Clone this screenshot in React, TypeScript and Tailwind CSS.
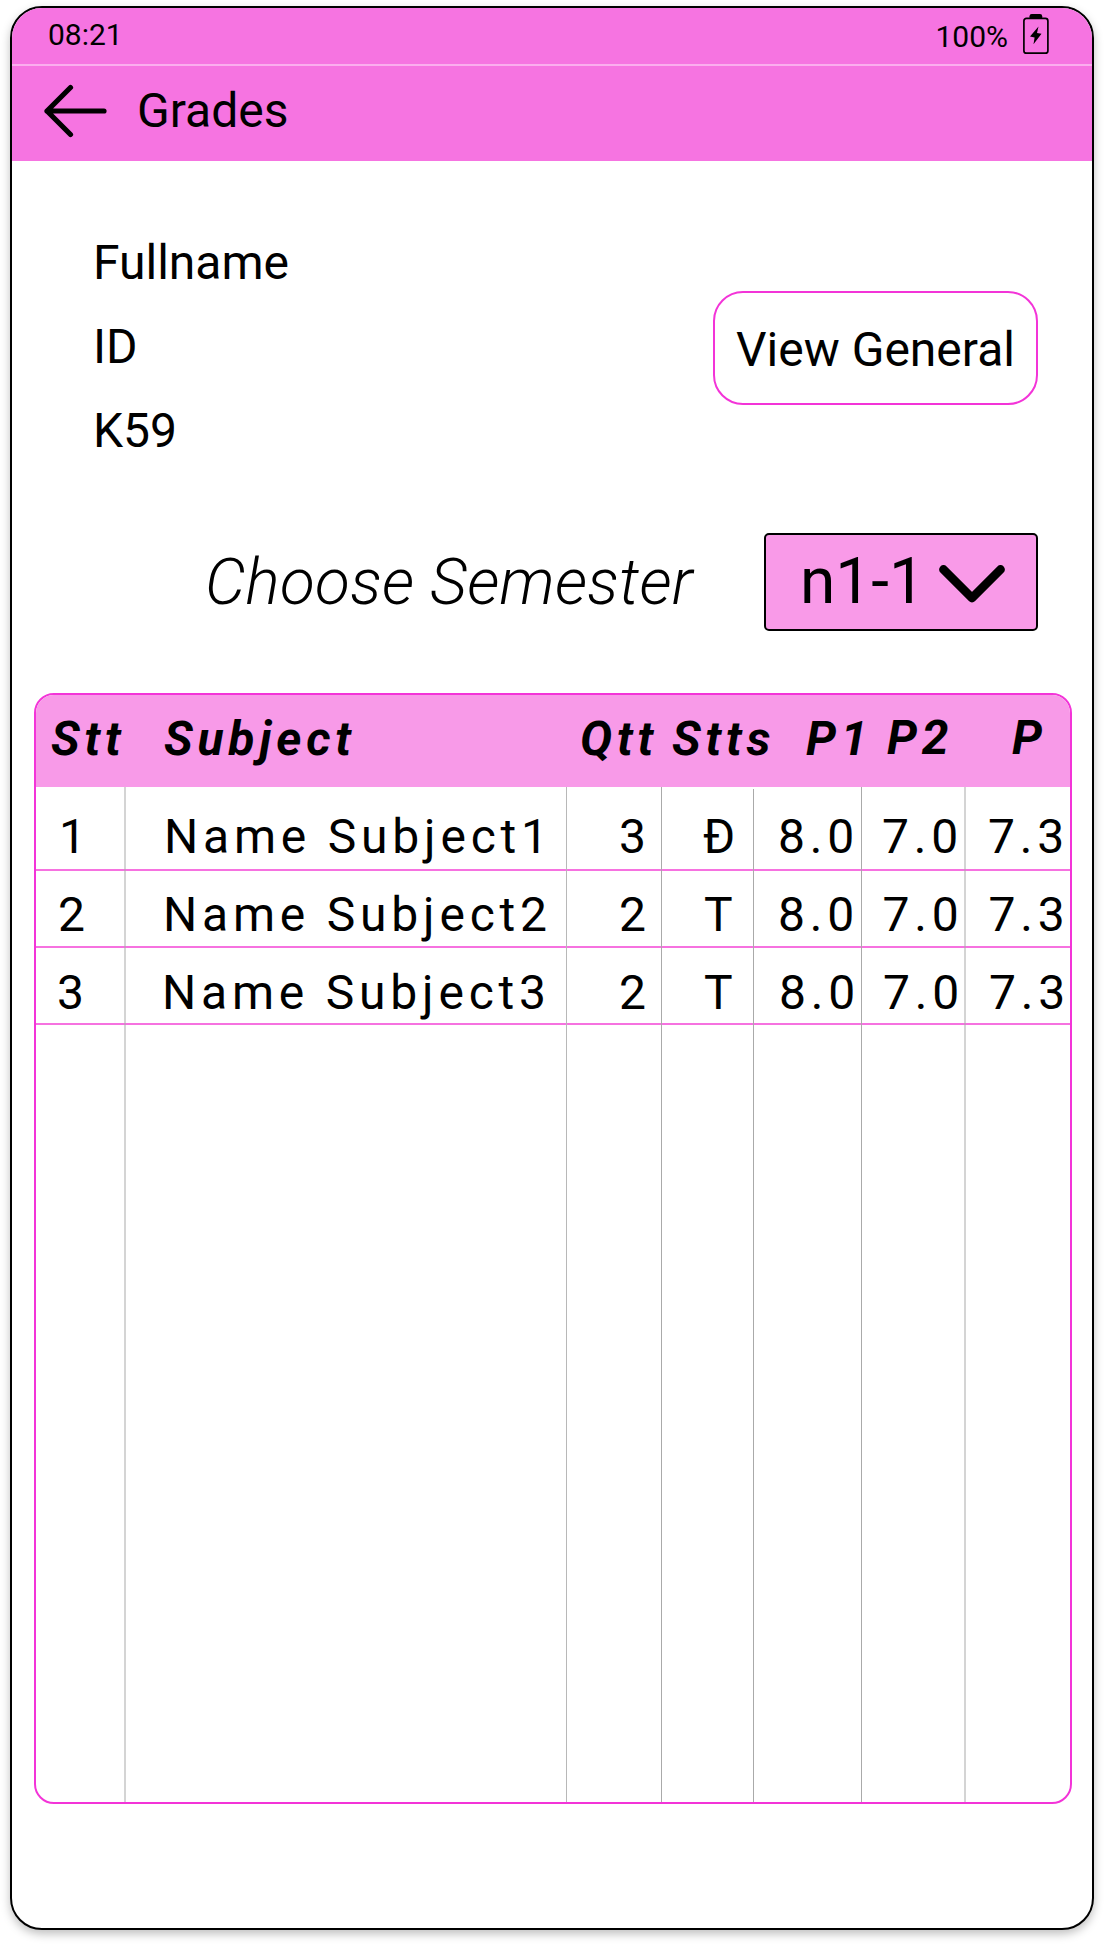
const columns = [
  { label: 'Stt', head: 'pl-[15px]' },
  { label: 'Subject', head: 'pl-[38px]' },
  { label: 'Qtt', head: 'pl-[13px]' },
  { label: 'Stts', head: 'pl-[10px]' },
  { label: 'P1', head: 'pl-[52px]' },
  { label: 'P2', head: 'pl-[25px] -mt-px' },
  { label: 'P', head: 'pl-[46px] -mt-px' },
];

const rows = [
  {
    box: 'h-[84px] pt-[22px]',
    cells: [
      ['1', 'pl-[23px]'],
      ['Name Subject1', 'pl-[38px]'],
      ['3', 'pl-[52px]'],
      ['Đ', 'pl-[41px]'],
      ['8.0', 'pl-[24px]'],
      ['7.0', 'pl-[20px]'],
      ['7.3', 'pl-[22px]'],
    ],
  },
  {
    box: 'h-[77px] pt-[16px]',
    cells: [
      ['2', 'pl-[22px]'],
      ['Name Subject2', 'pl-[37px]'],
      ['2', 'pl-[52px]'],
      ['T', 'pl-[42px]'],
      ['8.0', 'pl-[24px]'],
      ['7.0', 'pl-[20.500px]'],
      ['7.3', 'pl-[22.500px]'],
    ],
  },
  {
    box: 'h-[77px] pt-[17px]',
    cells: [
      ['3', 'pl-[21px]'],
      ['Name Subject3', 'pl-[36px]'],
      ['2', 'pl-[52px]'],
      ['T', 'pl-[42px]'],
      ['8.0', 'pl-[25px]'],
      ['7.0', 'pl-[21px]'],
      ['7.3', 'pl-[23px]'],
    ],
  },
];

const grid = 'grid grid-cols-[90px_441px_95px_92px_108px_104px_104px]';

function ArrowLeft() {
  return (
    <svg width="64" height="54" viewBox="0 0 64 54" fill="none" stroke="#000" strokeWidth="5.2" strokeLinecap="round" strokeLinejoin="round">
      <path d="M4 27H61M27.500 3.500L4 27L27.500 50.500" />
    </svg>
  );
}

function Battery() {
  return (
    <svg width="26" height="41" viewBox="0 0 26 41">
      <path d="M6.500 5V2.200Q6.500 0 8.700 0H17Q19.200 0 19.200 2.200V5Z" />
      <rect x="0.900" y="4.400" width="24" height="34.800" rx="2.500" fill="none" stroke="#000" strokeWidth="1.700" />
      <path d="M15.500 12.500L7 22.600L11.600 23.500L10.500 30.200L18.500 19.700L14 19Z" />
    </svg>
  );
}

function Chevron() {
  return (
    <svg width="68" height="40" viewBox="0 0 68 40" fill="none" stroke="#000" strokeWidth="8.800" strokeLinecap="round" strokeLinejoin="round">
      <path d="M5.500 5.500L34 34L62.500 5.500" />
    </svg>
  );
}

function GradesTable() {
  return (
    <section className="mr-[20px] ml-[22px] mt-[62px] h-[1111px] overflow-hidden rounded-[20px] border-2 border-[#f334d8] text-[48px] leading-[56px] tracking-[4.8px]">
      <div className={`${grid} h-[92px] bg-[#f89ae8] pt-[16px] font-bold italic`}>
        {columns.map((c) => (
          <div key={c.label} className={`whitespace-nowrap ${c.head}`}>{c.label}</div>
        ))}
      </div>
      <div className="relative h-[1016px]">
        {rows.map((row, i) => (
          <div key={i} className={`${grid} ${row.box} border-b-2 border-[#f672e0]`}>
            {row.cells.map(([text, pad], j) => (
              <div key={j} className={`whitespace-nowrap ${pad}`}>{text}</div>
            ))}
          </div>
        ))}
        {/* column rules run over the row rules down to the table's foot */}
        <div className={`${grid} pointer-events-none absolute inset-0`}>
          <div className="border-r-2 border-[#aaa]/50" />
          <div className="border-r border-[#b8b8b8]" />
          <div className="border-r border-[#aaa]" />
          <div className="mt-[2px] border-r border-[#aaa]" />
          <div className="border-r border-[#aaa]" />
          <div className="border-r-2 border-[#aaa]/50" />
        </div>
      </div>
    </section>
  );
}

export default function App() {
  return (
    <div className="h-[1944px] w-[1104px] overflow-hidden bg-white px-[10px] pt-[6px] font-['Roboto',sans-serif] text-black">
      <main className="flex h-[1924px] flex-col overflow-hidden rounded-[32px] border-2 border-black bg-white shadow-[0_4px_10px_rgba(0,0,0,0.25)]">
        <div className="flex h-[58px] shrink-0 items-start justify-between border-b-2 border-[#fbaeee] bg-[#f674e1] pr-[43px] pl-[36px] text-[30px] leading-[36px]">
          <span className="pt-[9px]">08:21</span>
          <div className="flex gap-[15px]">
            <span className="pt-[11px]">100%</span>
            <div className="pt-[6px]"><Battery /></div>
          </div>
        </div>
        <header className="flex h-[95px] shrink-0 items-center gap-[30px] bg-[#f674e1] pb-[5px] pl-[31px]">
          <ArrowLeft />
          <h1 className="text-[48px] leading-[56px]">Grades</h1>
        </header>
        <section className="flex justify-between pt-[74px] pr-[54px] pl-[81px] text-[48px]">
          <div className="leading-[84px] -mt-[14px]">
            <p>Fullname</p>
            <p>ID</p>
            <p>K59</p>
          </div>
          <button className="mt-[56px] h-[114px] w-[325px] rounded-[30px] border-2 border-[#f334d8] pt-[4px] leading-[56px]">View General</button>
        </section>
        <section className="mt-[60px] flex items-center justify-between pr-[54px] pl-[193px] text-[64px] leading-[76px]">
          <span className="pt-[2px] font-light tracking-[0.300px] italic">Choose Semester</span>
          <button className="flex h-[98px] w-[274px] items-center gap-[13px] rounded-[5px] border-2 border-black bg-[#f99ae8] pl-[34px]">
            <span>n1-1</span>
            <div className="pt-[3px]"><Chevron /></div>
          </button>
        </section>
        <GradesTable />
      </main>
    </div>
  );
}
